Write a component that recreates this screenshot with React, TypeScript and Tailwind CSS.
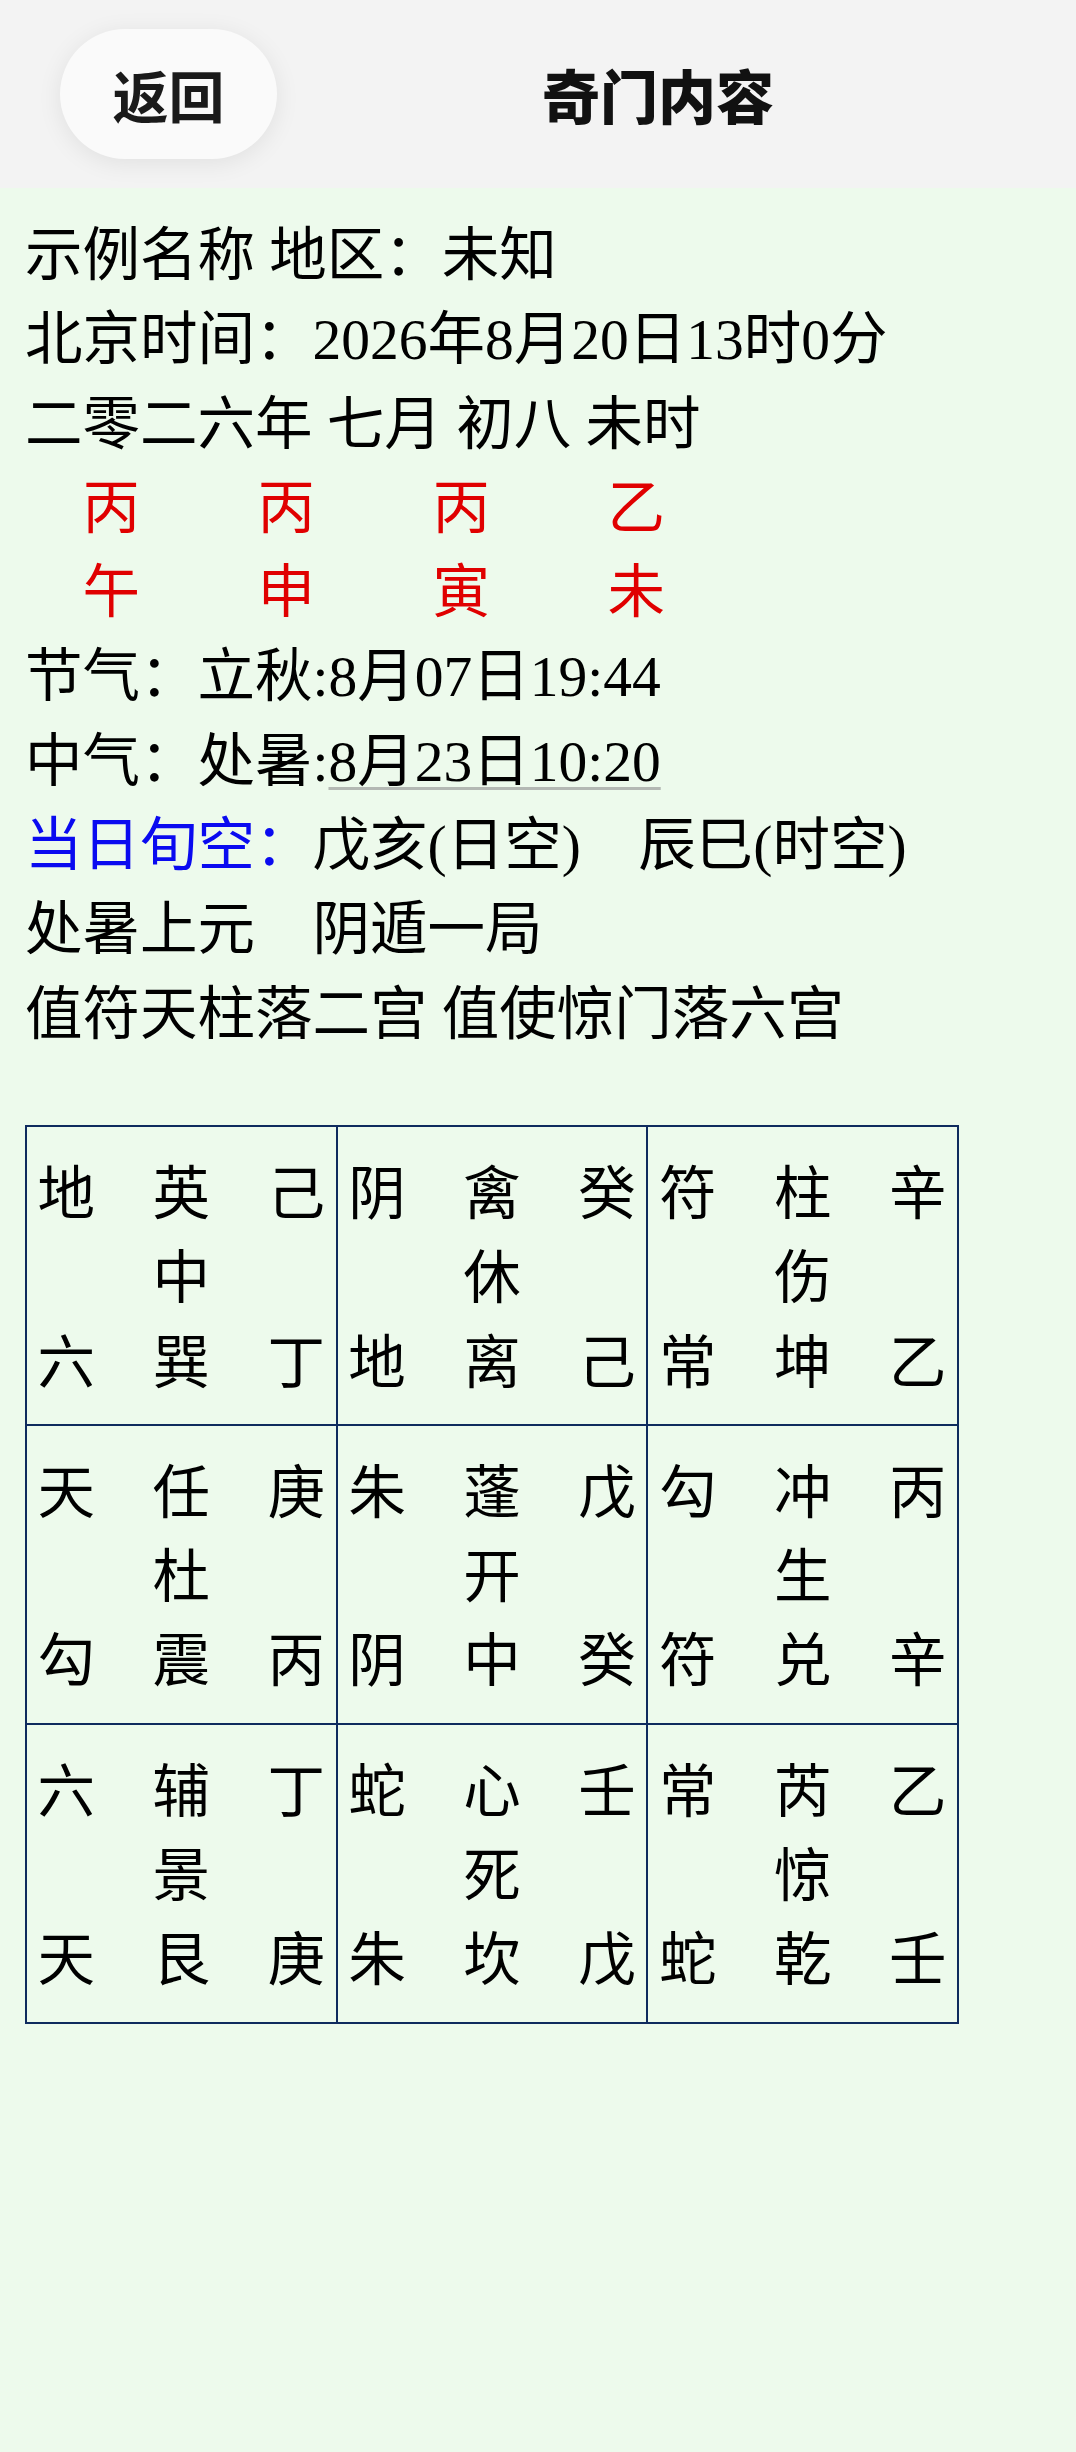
import React from "react";

const pillarsTop = ["丙", "丙", "丙", "乙"];
const pillarsBottom = ["午", "申", "寅", "未"];

type Cell = { top: [string, string, string]; mid: string; bottom: [string, string, string] };

const cells: Cell[] = [
  { top: ["地", "英", "己"], mid: "中", bottom: ["六", "巽", "丁"] },
  { top: ["阴", "禽", "癸"], mid: "休", bottom: ["地", "离", "己"] },
  { top: ["符", "柱", "辛"], mid: "伤", bottom: ["常", "坤", "乙"] },
  { top: ["天", "任", "庚"], mid: "杜", bottom: ["勾", "震", "丙"] },
  { top: ["朱", "蓬", "戊"], mid: "开", bottom: ["阴", "中", "癸"] },
  { top: ["勾", "冲", "丙"], mid: "生", bottom: ["符", "兑", "辛"] },
  { top: ["六", "辅", "丁"], mid: "景", bottom: ["天", "艮", "庚"] },
  { top: ["蛇", "心", "壬"], mid: "死", bottom: ["朱", "坎", "戊"] },
  { top: ["常", "芮", "乙"], mid: "惊", bottom: ["蛇", "乾", "壬"] },
];

const Row3 = ({ chars }: { chars: string[] }) => (
  <div className="flex justify-center gap-[57.5px]">
    {chars.map((c, i) => (
      <span key={i} className="w-[57.5px] text-center">
        {c}
      </span>
    ))}
  </div>
);

const Palace = ({ cell }: { cell: Cell }) => (
  <div className="border-[1.5px] border-[#0f2b5e] pt-[20px] pb-[24px]">
    <Row3 chars={cell.top} />
    <div className="text-center">{cell.mid}</div>
    <Row3 chars={cell.bottom} />
  </div>
);

export default function App() {
  return (
    <div className="min-h-screen w-full bg-[#edfaec] font-['Liberation_Serif','Noto_Sans_CJK_SC',serif] text-black">
      <header className="flex h-[188px] items-center bg-[#f3f3f3] pl-[60px] pr-[37px]">
        <button className="flex h-[130px] w-[217px] items-center justify-center rounded-full bg-[#fafafa] font-['Noto_Sans_CJK_SC',sans-serif] text-[56px] font-bold text-[#1a1a1a] shadow-[0_4px_24px_rgba(0,0,0,0.08)]">
          返回
        </button>
        <h1 className="flex-1 text-center font-['Noto_Sans_CJK_SC',sans-serif] text-[58px] font-black text-[#111]">
          奇门内容
        </h1>
      </header>

      <main className="px-[25px] pt-[26px] text-[57.5px] leading-[84.3px]">
        <div>示例名称 地区：未知</div>
        <div>北京时间：2026年8月20日13时0分</div>
        <div>二零二六年 七月 初八 未时</div>
        <div className="flex pl-[57.5px] text-[#e00000]">
          {pillarsTop.map((c, i) => (
            <span key={i} className="w-[175px]">
              {c}
            </span>
          ))}
        </div>
        <div className="flex pl-[57.5px] text-[#e00000]">
          {pillarsBottom.map((c, i) => (
            <span key={i} className="w-[175px]">
              {c}
            </span>
          ))}
        </div>
        <div>节气：立秋:8月07日19:44</div>
        <div>
          中气：处暑:
          <span className="underline decoration-[#b3b8b3] decoration-[3px] underline-offset-[6px]">8月23日10:20</span>
        </div>
        <div>
          <span className="text-[#0a0af0]">当日旬空：</span>戊亥(日空)　辰巳(时空)
        </div>
        <div>处暑上元　阴遁一局</div>
        <div>值符天柱落二宫 值使惊门落六宫</div>

        <div className="mt-[68px] grid w-[934px] grid-cols-3 border-[1.5px] border-[#0f2b5e] font-['Noto_Sans_CJK_SC',sans-serif]">
          {cells.map((cell, i) => (
            <Palace key={i} cell={cell} />
          ))}
        </div>
      </main>
    </div>
  );
}
